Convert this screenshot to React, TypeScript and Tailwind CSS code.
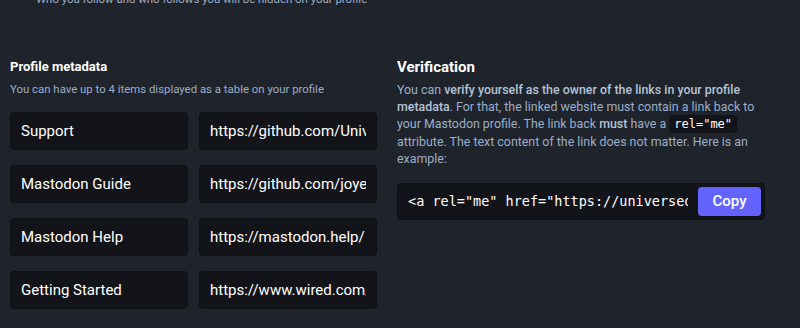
import React from 'react'

const fields = [
  { name: 'Support', value: 'https://github.com/UniverseodonOfficial/support' },
  { name: 'Mastodon Guide', value: 'https://github.com/joyeusenoelle/GuideToMastodon' },
  { name: 'Mastodon Help', value: 'https://mastodon.help/' },
  { name: 'Getting Started', value: 'https://www.wired.com/story/how-to-get-started-use-mastodon/' },
]

const inputClass =
  'w-full h-[38px] px-[10px] rounded-[4px] bg-[#131419] border border-[#0f1014] text-white text-[15px] outline-none font-["Roboto",sans-serif]'

export default function App() {
  return (
    <div className="w-[800px] h-[328px] overflow-hidden bg-[#1f232b] font-['Roboto',sans-serif]">
      {/* hint from the checkbox above */}
      <p className="-mt-[9px] pl-[36px] text-[11.4px] leading-[16px] text-[#9baec8]">
        Who you follow and who follows you will be hidden on your profile
      </p>

      <div className="mt-[51px] pl-[10px] grid grid-cols-[367px_368px] gap-x-[20px]">
        {/* Profile metadata */}
        <div>
          <h4 className="text-[13px] leading-[18px] font-bold text-white">Profile metadata</h4>
          <p className="mt-[5px] text-[11.4px] leading-[16px] text-[#9baec8]">
            You can have up to 4 items displayed as a table on your profile
          </p>
          <div className="mt-[15px] grid grid-cols-2 gap-x-[11px] gap-y-[15px]">
            {fields.map((f) => (
              <React.Fragment key={f.name}>
                <input readOnly defaultValue={f.name} className={inputClass} />
                <input readOnly defaultValue={f.value} className={inputClass} />
              </React.Fragment>
            ))}
          </div>
        </div>

        {/* Verification */}
        <div>
          <h4 className="text-[15px] leading-[18px] font-bold text-white">Verification</h4>
          <p className="mt-[5px] text-[12.4px] leading-[17px] text-[#9baec8]">
            You can{' '}
            <strong className="font-medium text-[#b4c3d8]">
              verify yourself as the owner of the links in your profile metadata
            </strong>
            . For that, the linked website must contain a link back to your Mastodon profile. The link
            back <strong className="font-medium text-[#b4c3d8]">must</strong> have a{' '}
            <code className="px-[5px] py-[2px] rounded-[4px] bg-[#131419] text-white text-[12px] font-['DejaVu_Sans_Mono',monospace]">
              rel="me"
            </code>{' '}
            attribute. The text content of the link does not matter. Here is an example:
          </p>
          <div className="mt-[16px] h-[37px] flex items-center gap-[10px] pl-[10px] pr-[3px] rounded-[4px] bg-[#131419] border border-[#0f1014]">
            <input
              readOnly
              defaultValue={'<a rel="me" href="https://universeodon.com/@me">Mastodon</a>'}
              className="flex-1 min-w-0 bg-transparent outline-none text-white text-[13.5px] font-['DejaVu_Sans_Mono',monospace]"
            />
            <button className="w-[63px] h-[29px] rounded-[4px] bg-[#6364ff] text-white text-[15px] font-medium">
              Copy
            </button>
          </div>
        </div>
      </div>
    </div>
  )
}
